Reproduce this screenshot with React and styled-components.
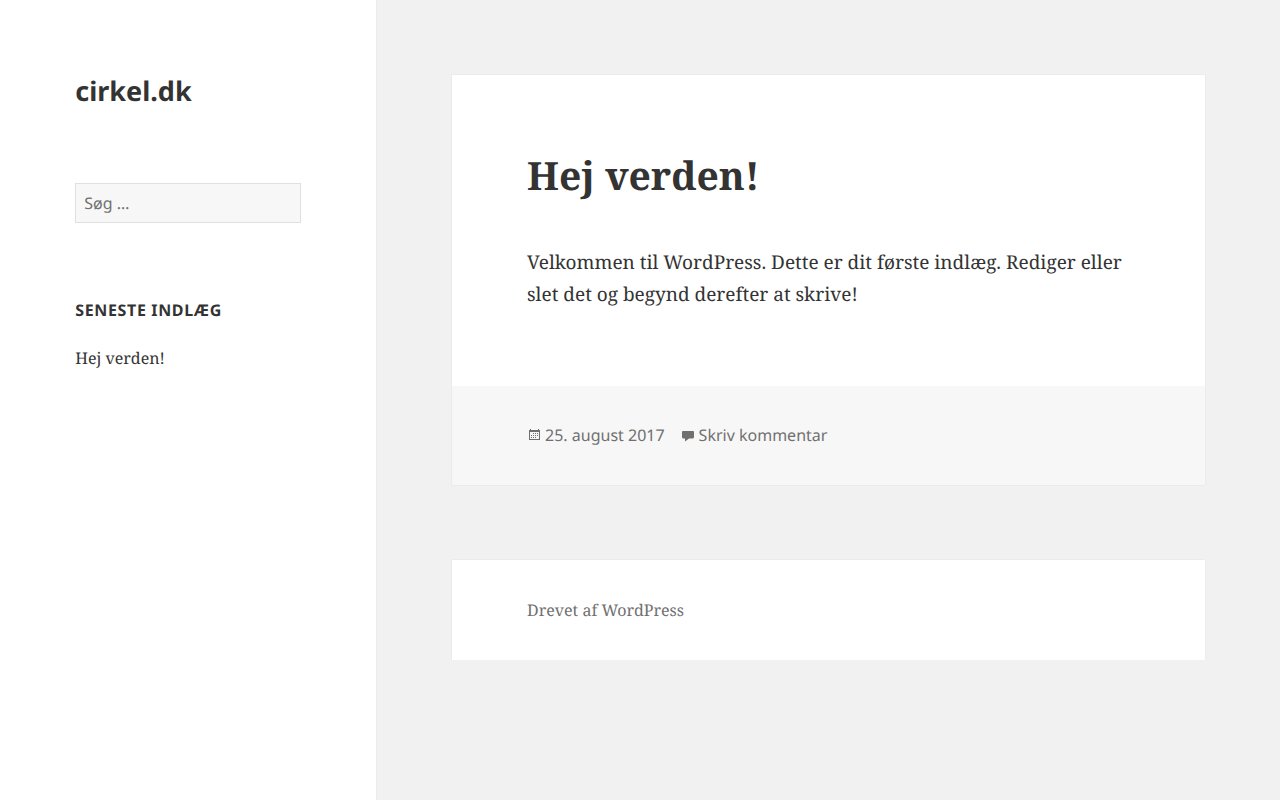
import styled, { createGlobalStyle } from "styled-components";

const sans = '"Noto Sans", sans-serif';
const serif = '"Noto Serif", "Droid Serif", "DejaVu Serif", serif';

const GlobalStyle = createGlobalStyle`
    *,
    *::before,
    *::after {
        box-sizing: border-box;
    }

    body {
        margin: 0;
        background: #f1f1f1;
        color: #333;
        font-family: ${serif};
        font-size: 19px;
        line-height: 32px;
        text-rendering: geometricPrecision;
    }

    a {
        color: inherit;
        text-decoration: none;
    }
`;

const Page = styled.div`
    display: grid;
    grid-template-columns: 5fr 12fr;
    min-height: 100vh;
`;

const Sidebar = styled.header`
    padding: 75px 20%;
    background: white;
    box-shadow: 0 0 1px rgba(0, 0, 0, 0.15);
`;

const SiteTitle = styled.h1`
    margin: 0 0 76px;

    font-family: ${sans};
    font-size: 27px;
    font-weight: 700;
    line-height: 32px;
`;

const SearchField = styled.input`
    display: block;
    width: 100%;
    height: 40px;
    padding: 0 8px;

    background: #f7f7f7;
    border: 1px solid #e0e0e0;
    border-radius: 0;
    color: #707070;

    font-family: ${sans};
    font-size: 16px;
    line-height: 24px;
    text-rendering: inherit;
    appearance: none;

    &::placeholder {
        color: #707070;
        opacity: 1;
    }
`;

const Widget = styled.section`
    margin-top: 75px;

    font-size: 16px;
    line-height: 24px;
`;

const WidgetTitle = styled.h2`
    margin: 0 0 24px;

    font-family: ${sans};
    font-size: 16px;
    font-weight: 700;
    letter-spacing: 0.04em;
    text-transform: uppercase;
`;

const PostList = styled.ul`
    margin: 0;
    padding: 0;
    list-style: none;
`;

const Content = styled.div`
    display: flex;
    flex-direction: column;
    gap: 75px;
    padding: 75px calc(100% / 12);
`;

const Card = styled.article`
    background: white;
    box-shadow: 0 0 1px rgba(0, 0, 0, 0.15);
`;

const Entry = styled.div`
    padding: 77px 10% 76px;
`;

const EntryTitle = styled.h2`
    margin: 0 0 46px;

    font-size: 39px;
    font-weight: 700;
    line-height: 48px;
`;

const Paragraph = styled.p`
    margin: 0;
`;

const EntryMeta = styled.footer`
    display: flex;
    flex-wrap: wrap;
    gap: 16px;
    padding: 37px 10% 38px;

    background: #f7f7f7;
    color: #707070;

    font-family: ${sans};
    font-size: 16px;
    line-height: 24px;
`;

const MetaLink = styled.a`
    display: flex;
    align-items: center;
    gap: 2px;
`;

// no shadow below the last box
const SiteFooter = styled(Card)`
    padding: 38px 10%;
    clip-path: inset(-1px -1px 0);

    color: #707070;

    font-size: 16px;
    line-height: 24px;
`;

function CalendarIcon() {
    return (
        <svg width="16" height="16" viewBox="0 0 16 16" fill="currentColor" aria-hidden="true">
            <path fillRule="evenodd" d="M2 3h1V2h1v1h7V2h1v1h1v10H2V3zm1 2v7h9V5H3z" />
            <path d="M6 6h1v1H6zM8 6h1v1H8zM10 6h1v1h-1zM4 8h1v1H4zM6 8h1v1H6zM8 8h1v1H8zM10 8h1v1h-1zM4 10h1v1H4zM6 10h1v1H6zM8 10h1v1H8z" />
        </svg>
    );
}

function CommentIcon() {
    return (
        <svg width="16" height="16" viewBox="0 0 16 16" fill="currentColor" aria-hidden="true">
            <path d="M2 4h10a1 1 0 0 1 1 1v5a1.500 1.500 0 0 1-1.500 1.500H8L4 14.500v-3H2.500A1.500 1.500 0 0 1 1 10V5a1 1 0 0 1 1-1z" />
        </svg>
    );
}

function App() {
    return (
        <>
            <GlobalStyle />
            <Page>
                <Sidebar>
                    <SiteTitle>
                        <a href="#home">cirkel.dk</a>
                    </SiteTitle>
                    <form role="search">
                        <SearchField type="search" placeholder="Søg …" aria-label="Søg" />
                    </form>
                    <Widget>
                        <WidgetTitle>Seneste indlæg</WidgetTitle>
                        <PostList>
                            <li>
                                <a href="#hej-verden">Hej verden!</a>
                            </li>
                        </PostList>
                    </Widget>
                </Sidebar>

                <Content>
                    <Card id="hej-verden">
                        <Entry>
                            <EntryTitle>
                                <a href="#hej-verden">Hej verden!</a>
                            </EntryTitle>
                            <Paragraph>
                                Velkommen til WordPress. Dette er dit første indlæg. Rediger eller slet det og begynd
                                derefter at skrive!
                            </Paragraph>
                        </Entry>
                        <EntryMeta>
                            <MetaLink href="#hej-verden">
                                <CalendarIcon />
                                <time dateTime="2017-08-25">25. august 2017</time>
                            </MetaLink>
                            <MetaLink href="#respond">
                                <CommentIcon />
                                Skriv kommentar
                            </MetaLink>
                        </EntryMeta>
                    </Card>

                    <SiteFooter as="footer">
                        <a href="https://wordpress.org/">Drevet af WordPress</a>
                    </SiteFooter>
                </Content>
            </Page>
        </>
    );
}

export default App;
